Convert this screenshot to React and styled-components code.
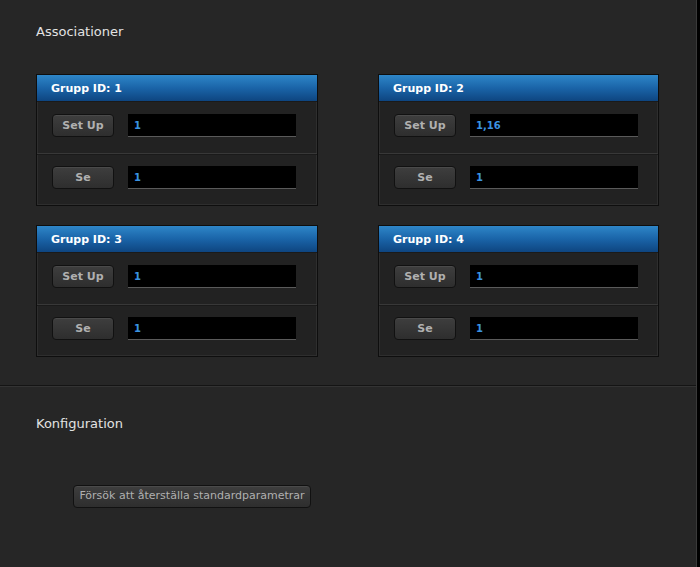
import React from 'react';
import styled, { createGlobalStyle } from 'styled-components';

const GlobalStyle = createGlobalStyle`
  html, body {
    margin: 0;
    padding: 0;
    background: #000;
  }
  body {
    font-family: "DejaVu Sans", Verdana, sans-serif;
  }
`;

const Page = styled.div`
  width: 696px;
  height: 567px;
  background: #262626;
  border-right: 1px solid #3a3a3a;
  overflow: hidden;
`;

const Section = styled.section`
  padding: ${p => p.$pad || '0 0 0 36px'};
  border-bottom: ${p => (p.$divider ? '1px solid #141414' : 'none')};
  box-shadow: ${p => (p.$divider ? '0 1px 0 #333' : 'none')};
`;

const Heading = styled.h2`
  margin: 0;
  font-size: 13px;
  font-weight: normal;
  color: #e2e2e2;
  line-height: 16px;
`;

const Grid = styled.div`
  display: grid;
  grid-template-columns: 282px 281px;
  column-gap: 60px;
  row-gap: 19px;
  margin-top: 34px;
`;

const Panel = styled.div`
  background: #222;
  border: 1px solid #0e0e0e;
  box-shadow: inset 0 0 0 1px #2e2e2e;
`;

const PanelHeader = styled.div`
  height: 26px;
  display: flex;
  align-items: center;
  padding-left: 14px;
  background: linear-gradient(to bottom, #2e86c8 0%, #1a64a8 50%, #0e4580 100%);
  color: #fff;
  font-size: 11px;
  font-weight: bold;
`;

const Row = styled.div`
  display: flex;
  align-items: flex-start;
  gap: 14px;
  height: 52px;
  padding: 12px 0 0 15px;
  box-sizing: border-box;
  border-top: ${p => (p.$first ? '1px solid #1a1a1a' : '1px solid #383838')};
  box-shadow: ${p => (p.$first ? 'none' : 'inset 0 1px 0 #1a1a1a')};
`;

const Button = styled.button`
  width: ${p => p.$width || '62px'};
  height: 23px;
  padding: 0;
  border: 1px solid #111;
  border-radius: 4px;
  background: linear-gradient(to bottom, #3e3e3e 0%, #2e2e2e 100%);
  box-shadow: inset 0 1px 0 #4a4a4a;
  color: #b0b0b0;
  font-family: "DejaVu Sans", Verdana, sans-serif;
  font-size: 11px;
  font-weight: ${p => (p.$plain ? 'normal' : 'bold')};
  line-height: 20px;
  cursor: pointer;
`;

const Field = styled.div`
  width: 168px;
  height: 23px;
  box-sizing: border-box;
  background: #000;
  border-bottom: 1px solid #5a5a5a;
  color: #3a93e0;
  font-size: 10px;
  font-weight: bold;
  padding: 6px 0 0 6px;
`;

const ResetRow = styled.div`
  margin-top: 52px;
  padding-left: 37px;
`;

const groups = [
  { id: 1, setup: '1', se: '1' },
  { id: 2, setup: '1,16', se: '1' },
  { id: 3, setup: '1', se: '1' },
  { id: 4, setup: '1', se: '1' },
];

const GroupPanel = ({ group }) => (
  <Panel>
    <PanelHeader>Grupp ID: {group.id}</PanelHeader>
    <Row $first>
      <Button>Set Up</Button>
      <Field>{group.setup}</Field>
    </Row>
    <Row>
      <Button>Se</Button>
      <Field>{group.se}</Field>
    </Row>
  </Panel>
);

const App = () => (
  <Page>
    <GlobalStyle />
    <Section $divider $pad="24px 0 28px 36px">
      <Heading>Associationer</Heading>
      <Grid>
        {groups.map(g => (
          <GroupPanel key={g.id} group={g} />
        ))}
      </Grid>
    </Section>
    <Section $pad="30px 0 0 36px">
      <Heading>Konfiguration</Heading>
      <ResetRow>
        <Button $width="238px" $plain>Försök att återställa standardparametrar</Button>
      </ResetRow>
    </Section>
  </Page>
);

export default App;
